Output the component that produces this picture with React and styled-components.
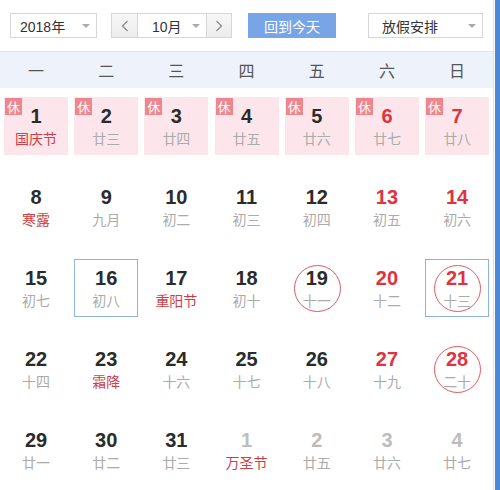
import React from 'react';
import styled, { createGlobalStyle, css } from 'styled-components';

// --- Global ---

const GlobalStyle = createGlobalStyle`
  html, body {
    margin: 0;
    padding: 0;
    background: #fff;
  }
  body {
    font-family: "Liberation Sans", "Noto Sans CJK SC", sans-serif;
  }
`;

// --- Styled Components ---

const Page = styled.div`
  display: flex;
  width: 500px;
  height: 490px;
  overflow: hidden;
`;

const Calendar = styled.div`
  width: 493px;
  border-right: 1px solid #e2e2e2;
`;

const EdgeBar = styled.div`
  flex: 1;
  margin-left: 1px;
  background: #4c88da;
`;

const Toolbar = styled.div`
  display: flex;
  align-items: center;
  height: 51px;
  padding: 0 0 0 10px;
  box-sizing: border-box;
`;

const Select = styled.div`
  display: flex;
  align-items: center;
  justify-content: space-between;
  box-sizing: border-box;
  width: ${p => p.$width}px;
  height: 25px;
  margin-left: ${p => p.$gap || 0}px;
  padding: 0 6px 0 ${p => p.$padLeft || 9}px;
  border: 1px solid #d6d6d6;
  background: #fff;
  color: #333;
  font-size: 14px;
  font-family: "Liberation Sans", "Noto Sans CJK SC", sans-serif;
`;

const Caret = styled.span`
  width: 0;
  height: 0;
  border-left: 4px solid transparent;
  border-right: 4px solid transparent;
  border-top: 4px solid #aaa;
`;

const Arrow = styled.div`
  display: flex;
  align-items: center;
  justify-content: center;
  box-sizing: border-box;
  width: ${p => p.$width}px;
  height: 25px;
  margin-left: ${p => p.$gap || 0}px;
  border: 1px solid #d6d6d6;
  ${p => p.$side === 'left' ? css`border-right: none;` : css`border-left: none;`}
  background: linear-gradient(#f7f7f7, #ececec);
  color: #888;
`;

const TodayButton = styled.div`
  display: flex;
  align-items: center;
  justify-content: center;
  width: 88px;
  height: 25px;
  margin-left: 16px;
  background: #78a5e6;
  color: #fff;
  font-size: 14px;
  font-family: "Noto Sans CJK SC", sans-serif;
`;

const WeekHeader = styled.div`
  display: grid;
  grid-template-columns: repeat(7, 64px);
  column-gap: 6.2px;
  padding-left: 4px;
  height: 36px;
  align-items: center;
  background: #eef3fb;
  border-top: 1px solid #e1e6ee;
  color: #555;
  font-size: 16px;
  font-family: "Noto Sans CJK SC", sans-serif;
  text-align: center;
`;

const Grid = styled.div`
  display: grid;
  grid-template-columns: repeat(7, 64px);
  grid-auto-rows: 58px;
  column-gap: 6.2px;
  row-gap: 23px;
  padding: 9px 0 0 4px;
`;

const Cell = styled.div`
  position: relative;
  box-sizing: border-box;
  display: flex;
  flex-direction: column;
  align-items: center;
  padding-top: 8px;
  background: ${p => p.$rest ? '#fde6eb' : 'transparent'};
  border: 1px solid ${p => p.$selected ? '#8fb2da' : 'transparent'};
  ${p => p.$circled && css`
    &::after {
      content: '';
      position: absolute;
      left: 50%;
      top: 50%;
      width: 45px;
      height: 45px;
      margin: -23px 0 0 -23px;
      border: 1px solid #dd5b63;
      border-radius: 50%;
    }
  `}
`;

const RestBadge = styled.span`
  position: absolute;
  left: 0;
  top: 0;
  width: 17px;
  height: 17px;
  background: #ee8690;
  color: #fff;
  font-size: 13px;
  line-height: 17px;
  text-align: center;
  font-family: "Noto Sans CJK SC", sans-serif;
`;

const DayNum = styled.div`
  font-family: "Liberation Sans", Arial, sans-serif;
  font-weight: bold;
  font-size: 20px;
  line-height: 20px;
  color: ${p => p.$tone === 'red' ? '#e0333f' : p.$tone === 'dim' ? '#bdbdbd' : '#2b2b2b'};
`;

const Lunar = styled.div`
  margin-top: 4px;
  font-family: "Noto Sans CJK SC", sans-serif;
  font-size: 14px;
  line-height: 16px;
  color: ${p => p.$festival ? '#cf3d45' : '#ababab'};
`;

// --- Data ---

const weekdays = ['一', '二', '三', '四', '五', '六', '日'];

const days = [
  { d: 1, l: '国庆节', f: true, rest: true },
  { d: 2, l: '廿三', rest: true },
  { d: 3, l: '廿四', rest: true },
  { d: 4, l: '廿五', rest: true },
  { d: 5, l: '廿六', rest: true },
  { d: 6, l: '廿七', rest: true, tone: 'red' },
  { d: 7, l: '廿八', rest: true, tone: 'red' },
  { d: 8, l: '寒露', f: true },
  { d: 9, l: '九月' },
  { d: 10, l: '初二' },
  { d: 11, l: '初三' },
  { d: 12, l: '初四' },
  { d: 13, l: '初五', tone: 'red' },
  { d: 14, l: '初六', tone: 'red' },
  { d: 15, l: '初七' },
  { d: 16, l: '初八', selected: true },
  { d: 17, l: '重阳节', f: true },
  { d: 18, l: '初十' },
  { d: 19, l: '十一', circled: true },
  { d: 20, l: '十二', tone: 'red' },
  { d: 21, l: '十三', tone: 'red', selected: true, circled: true },
  { d: 22, l: '十四' },
  { d: 23, l: '霜降', f: true },
  { d: 24, l: '十六' },
  { d: 25, l: '十七' },
  { d: 26, l: '十八' },
  { d: 27, l: '十九', tone: 'red' },
  { d: 28, l: '二十', tone: 'red', circled: true },
  { d: 29, l: '廿一' },
  { d: 30, l: '廿二' },
  { d: 31, l: '廿三' },
  { d: 1, l: '万圣节', f: true, tone: 'dim' },
  { d: 2, l: '廿五', tone: 'dim' },
  { d: 3, l: '廿六', tone: 'dim' },
  { d: 4, l: '廿七', tone: 'dim' },
];

const Chevron = ({ dir }) => (
  <svg width="8" height="12" viewBox="0 0 8 12">
    <path
      d={dir === 'left' ? 'M6.5 1 L1.5 6 L6.5 11' : 'M1.5 1 L6.5 6 L1.5 11'}
      fill="none"
      stroke="#888"
      strokeWidth="1.2"
    />
  </svg>
);

// --- Component ---

function App() {
  return (
    <>
      <GlobalStyle />
      <Page>
        <Calendar>
          <Toolbar>
            <Select $width={87}>2018年<Caret /></Select>
            <Arrow $width={26} $gap={14} $side="left"><Chevron dir="left" /></Arrow>
            <Select $width={70} $padLeft={14}>10月<Caret /></Select>
            <Arrow $width={25} $side="right"><Chevron dir="right" /></Arrow>
            <TodayButton>回到今天</TodayButton>
            <Select $width={115} $gap={32} $padLeft={13}>放假安排<Caret /></Select>
          </Toolbar>

          <WeekHeader>
            {weekdays.map(w => <span key={w}>{w}</span>)}
          </WeekHeader>

          <Grid>
            {days.map((day, i) => (
              <Cell key={i} $rest={day.rest} $selected={day.selected} $circled={day.circled}>
                {day.rest && <RestBadge>休</RestBadge>}
                <DayNum $tone={day.tone}>{day.d}</DayNum>
                <Lunar $festival={day.f}>{day.l}</Lunar>
              </Cell>
            ))}
          </Grid>
        </Calendar>
        <EdgeBar />
      </Page>
    </>
  );
}

export default App;
